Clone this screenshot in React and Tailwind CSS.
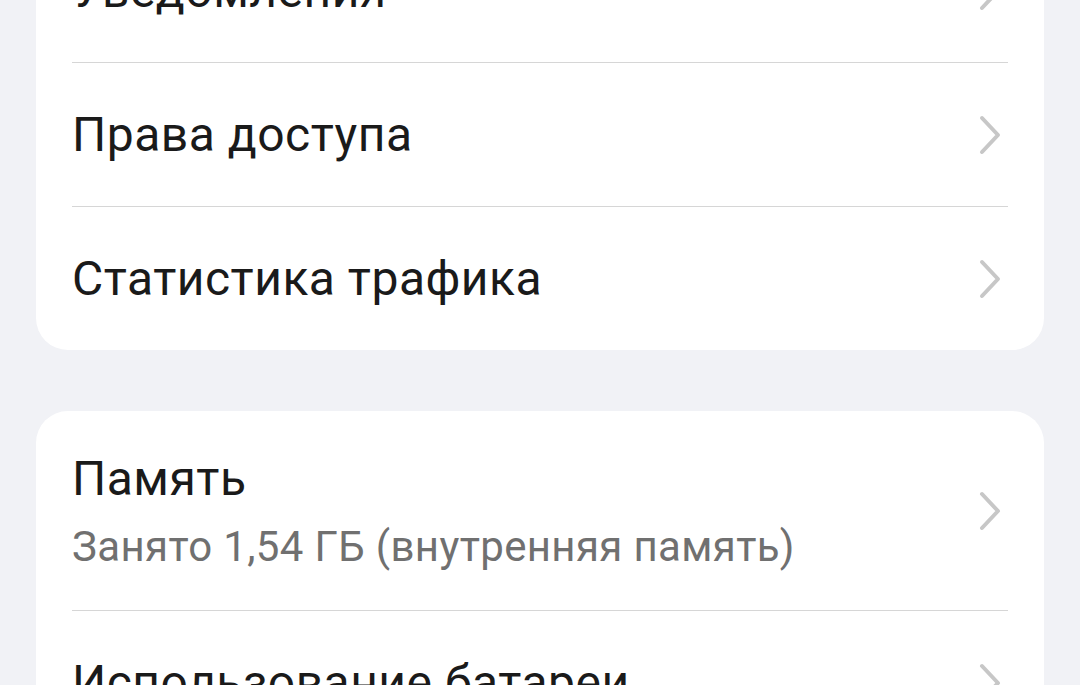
import { Fragment } from "react";

const firstGroup = ["Уведомления", "Права доступа", "Статистика трафика"];

const secondGroup = [
  { title: "Память", subtitle: "Занято 1,54 ГБ (внутренняя память)" },
  { title: "Использование батареи" },
];

function Chevron() {
  return (
    <svg width="24" height="40" viewBox="0 0 24 40" fill="none" className="shrink-0">
      <path
        d="M4 3 L20 20 L4 37"
        stroke="#c7c7c7"
        strokeWidth="4"
        strokeLinecap="round"
        strokeLinejoin="round"
      />
    </svg>
  );
}

function Row({ title, subtitle }) {
  return (
    <div
      className={`flex items-center justify-between pr-[6px] ${
        subtitle ? "h-[199px] pt-[1px]" : "h-[143px]"
      }`}
    >
      <div className="flex flex-col whitespace-nowrap">
        <span className="text-[48px] leading-[58px] tracking-[0.5px] text-[#1a1a1a]">{title}</span>
        {subtitle && (
          <span className="mt-[14px] text-[42px] leading-[50px] tracking-[0.35px] text-[#707070]">
            {subtitle}
          </span>
        )}
      </div>
      <Chevron />
    </div>
  );
}

function Card({ items, className = "" }) {
  return (
    <div className={`bg-white rounded-[32px] px-[36px] ${className}`}>
      {items.map((item, i) => (
        <Fragment key={i}>
          {i > 0 && <div className="h-px bg-[#d6d6d6]" />}
          <Row {...item} />
        </Fragment>
      ))}
    </div>
  );
}

export default function App() {
  return (
    <div
      className="h-[685px] w-[1080px] overflow-hidden bg-[#f1f2f6]"
      style={{ fontFamily: '"Roboto", "Noto Sans", sans-serif' }}
    >
      <div className="px-[36px] -mt-[81px]">
        <Card items={firstGroup.map((t) => ({ title: t }))} className="rounded-t-none" />
        <Card items={secondGroup} className="mt-[61px]" />
      </div>
    </div>
  );
}
